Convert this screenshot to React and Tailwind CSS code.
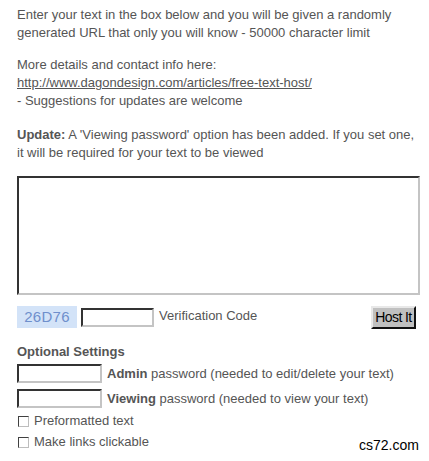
import React from "react";

function Inset({ className }) {
  return (
    <div
      className={
        "bg-white border-2 border-t-[#333] border-l-[#333] border-b-[#c4c4c4] border-r-[#c4c4c4] " +
        className
      }
    />
  );
}

function Check() {
  return (
    <span className="inline-block w-[11px] h-[11px] ml-[1px] bg-white border border-t-[#404040] border-l-[#404040] border-b-[#bdbdbd] border-r-[#bdbdbd] shrink-0" />
  );
}

export default function App() {
  return (
    <div className="relative w-[429px] h-[461px] bg-white pl-[17px] pt-[6px] font-['Liberation_Sans',Arial,sans-serif] text-[13px] leading-[18px] text-[#555]">
      <p>
        Enter your text in the box below and you will be given a randomly
        <br />
        generated URL that only you will know - 50000 character limit
      </p>
      <p className="mt-[14px]">
        More details and contact info here:
        <br />
        <a className="underline text-[#555]">http://www.dagondesign.com/articles/free-text-host/</a>
        <br />- Suggestions for updates are welcome
      </p>
      <p className="mt-[16px]">
        <b>Update:</b> A 'Viewing password' option has been added. If you set one,
        <br />
        it will be required for your text to be viewed
      </p>
      <Inset className="mt-[14px] w-[403px] h-[119px]" />
      <div className="mt-[11px] w-[399px] flex items-start">
        <div className="w-[60px] h-[22px] bg-[#d3e3f8] text-[#6f8fcc] text-[15px] leading-[22px] text-center tracking-[0.3px]">
          26D76
        </div>
        <Inset className="ml-[4px] mt-[2px] w-[73px] h-[19px]" />
        <span className="ml-[5px] mt-[1px]">Verification Code</span>
        <button className="ml-auto w-[45px] h-[23px] bg-[#c0c0c0] text-black text-[14px] leading-[19px] border-2 border-t-[#e8e8e8] border-l-[#e8e8e8] border-b-[#111] border-r-[#111] tracking-[-0.6px] px-0 whitespace-nowrap">
          Host It
        </button>
      </div>
      <div className="mt-[14px] font-bold">Optional Settings</div>
      <div className="mt-[3px] flex items-center">
        <Inset className="w-[85px] h-[19px]" />
        <span className="ml-[5px]">
          <b>Admin</b> password (needed to edit/delete your text)
        </span>
      </div>
      <div className="mt-[6px] flex items-center">
        <Inset className="w-[85px] h-[19px]" />
        <span className="ml-[5px]">
          <b>Viewing</b> password (needed to view your text)
        </span>
      </div>
      <div className="mt-[4px] flex items-center">
        <Check />
        <span className="ml-[5px]">Preformatted text</span>
      </div>
      <div className="mt-[3px] flex items-center">
        <Check />
        <span className="ml-[5px]">Make links clickable</span>
      </div>
      <div className="absolute left-[359px] top-[436px] text-[14px] leading-[18px] text-black">cs72.com</div>
    </div>
  );
}
